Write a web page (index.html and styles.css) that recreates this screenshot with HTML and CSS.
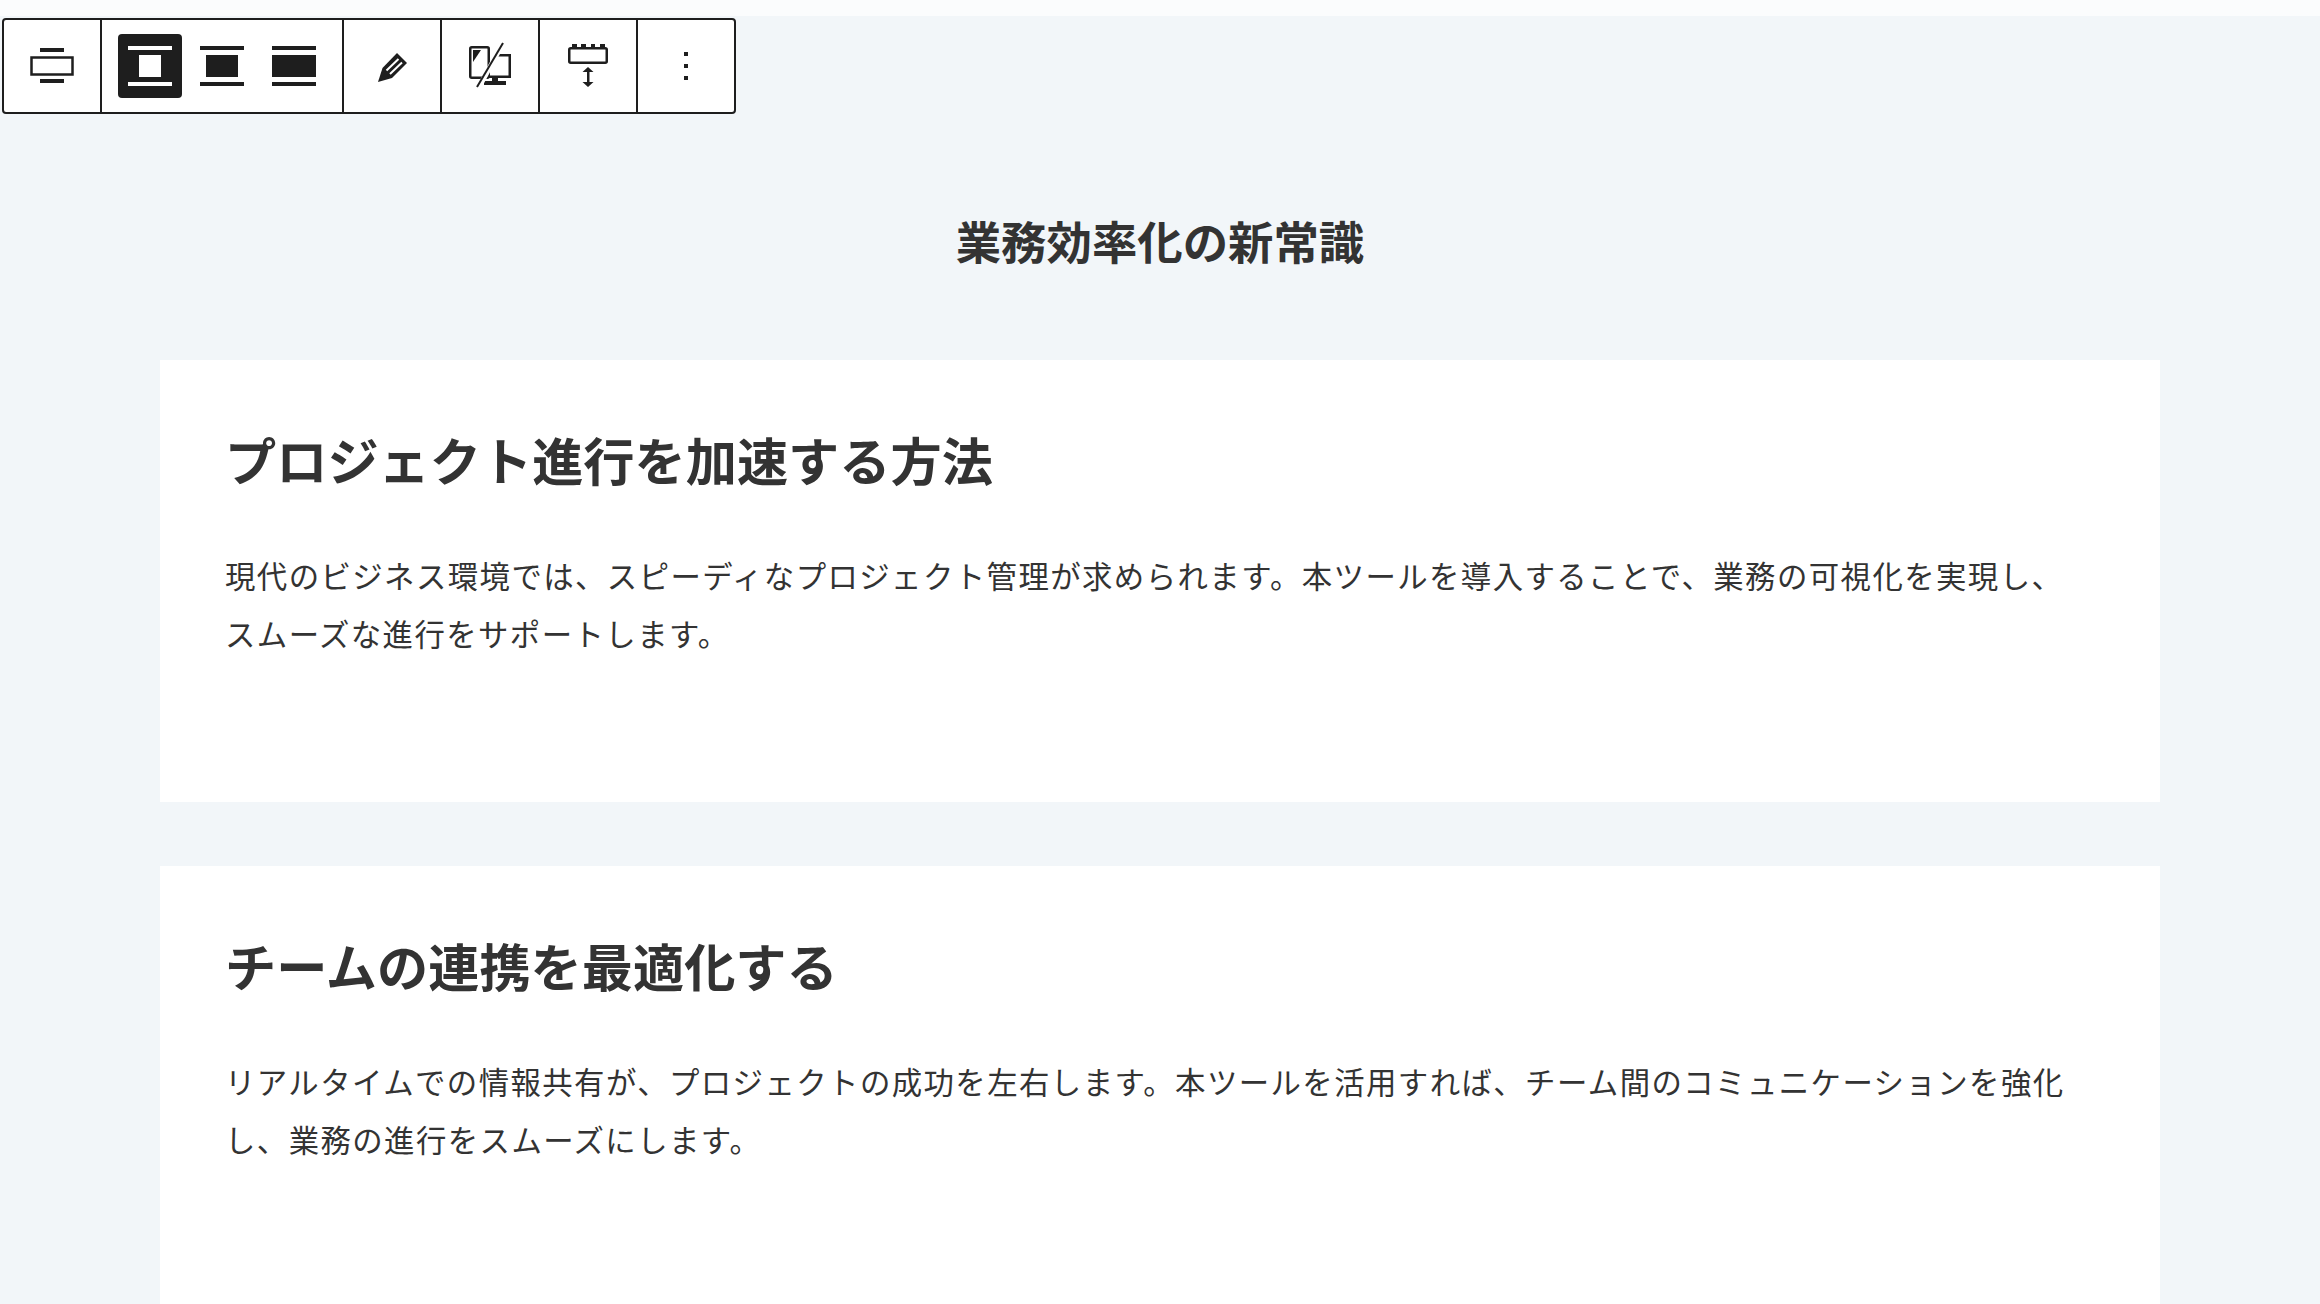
FILE: index.html
```html
<!DOCTYPE html>
<html lang="ja">
<head>
<meta charset="utf-8">
<title>業務効率化の新常識</title>
<link rel="stylesheet" href="styles.css">
</head>
<body>
<div class="page">
  <div class="toolbar">
    <div class="group">
      <button class="btn"><svg class="icon" viewBox="0 0 48 48"><path d="M12 6h24v4H12zM12 37h24v4H12z"/><rect class="line" x="3.500" y="15.500" width="41" height="17"/></svg></button>
    </div>
    <div class="group">
      <button class="btn active"><svg class="icon" viewBox="0 0 48 48"><path d="M2 4h44v4H2zM2 40h44v4H2zM13 13h22v22H13z"/></svg></button>
      <button class="btn"><svg class="icon" viewBox="0 0 48 48"><path d="M2 4h44v4H2zM2 40h44v4H2zM8 13h32v22H8z"/></svg></button>
      <button class="btn"><svg class="icon" viewBox="0 0 48 48"><path d="M2 4h44v4H2zM2 40h44v4H2zM2 13h44v22H2z"/></svg></button>
    </div>
    <div class="group">
      <button class="btn"><svg class="icon" viewBox="0 0 48 48"><path d="M10 40l4.500-14L29 11l10 10-15 15z"/><path class="slit" d="M18.500 28.500L30.500 17M22 32L34 20.500"/></svg></button>
    </div>
    <div class="group">
      <button class="btn"><svg class="icon" viewBox="0 0 48 48"><rect class="line" x="4.250" y="5.250" width="18.500" height="30.500" rx="1.500"/><path d="M7 8h8L7 20z"/><path class="line" d="M32 13.250h11.750v21.500H22"/><path d="M26 35h6v5h-6zM18 39h22v4H18z"/><path class="halo" d="M36 3L12 47"/><path class="slash" d="M37 1L11 45"/></svg></button>
    </div>
    <div class="group">
      <button class="btn"><svg class="icon" viewBox="0 0 48 48"><rect class="line" x="5.250" y="6.250" width="37.500" height="14.500" rx="1.500"/><path d="M8 2h5v3H8zM17 2h5v3h-5zM27 2h4v3h-4zM36 2h5v3h-5z"/><path d="M23 29h2.500v12H23z"/><path d="M24 25l5.500 5h-11zM24 45l5.500-5h-11z"/></svg></button>
    </div>
    <div class="group">
      <button class="btn"><svg class="icon" viewBox="0 0 48 48"><path d="M22 10h4v4h-4zM22 22h4v4h-4zM22 34h4v4h-4z"/></svg></button>
    </div>
  </div>
  <main class="canvas">
    <h1 class="title">業務効率化の新常識</h1>
    <section class="card">
      <h2 class="card-title">プロジェクト進行を加速する方法</h2>
      <p class="card-text">現代のビジネス環境では、スピーディなプロジェクト管理が求められます。本ツールを導入することで、業務の可視化を実現し、スムーズな進行をサポートします。</p>
    </section>
    <section class="card">
      <h2 class="card-title">チームの連携を最適化する</h2>
      <p class="card-text">リアルタイムでの情報共有が、プロジェクトの成功を左右します。本ツールを活用すれば、チーム間のコミュニケーションを強化し、業務の進行をスムーズにします。</p>
    </section>
  </main>
</div>
</body>
</html>
```
FILE: styles.css
```css
* { box-sizing: border-box; }
html, body { margin: 0; height: 100%; background: #fbfcfd; }
body {
  font-family: "Noto Sans CJK JP", "Noto Sans", sans-serif;
  color: #333;
  overflow: hidden;
}
.page { position: relative; height: 1304px; padding-top: 16px; overflow: hidden; }
.canvas { background: #f2f6f9; height: 1288px; padding-top: 184px; }
.title {
  margin: 0 0 80px;
  text-align: center;
  font-size: 45.4px;
  line-height: 80px;
  font-weight: 700;
}
.card {
  width: 2000px;
  height: 442px;
  margin: 0 auto 64px;
  background: #fff;
  padding: 61px 65px;
}
.card-title {
  margin: 0 0 49px;
  font-size: 51.2px;
  line-height: 76px;
  font-weight: 700;
}
.card-text {
  margin: 0;
  font-size: 30.4px;
  line-height: 58px;
  letter-spacing: 1.43px;
}
.toolbar {
  position: absolute;
  top: 18px;
  left: 2px;
  display: flex;
  height: 96px;
  background: #fff;
  border: 2px solid #1e1e1e;
  border-radius: 4px;
}
.group {
  display: flex;
  gap: 8px;
  align-items: center;
  padding: 0 16px;
  border-right: 2px solid #1e1e1e;
}
.group:last-child { border-right: 0; }
.btn {
  display: flex;
  align-items: center;
  justify-content: center;
  width: 64px;
  height: 64px;
  padding: 0;
  background: transparent;
  border: 0;
  border-radius: 4px;
  color: #1e1e1e;
}
.btn.active { background: #1e1e1e; color: #fff; }
.icon { display: block; width: 48px; height: 48px; fill: currentColor; }
.line { fill: none; stroke: currentColor; stroke-width: 2.5px; }
.slit { fill: none; stroke: #fff; stroke-width: 2px; }
.halo { fill: none; stroke: #fff; stroke-width: 5px; }
.slash { fill: none; stroke: currentColor; stroke-width: 2px; }
```
